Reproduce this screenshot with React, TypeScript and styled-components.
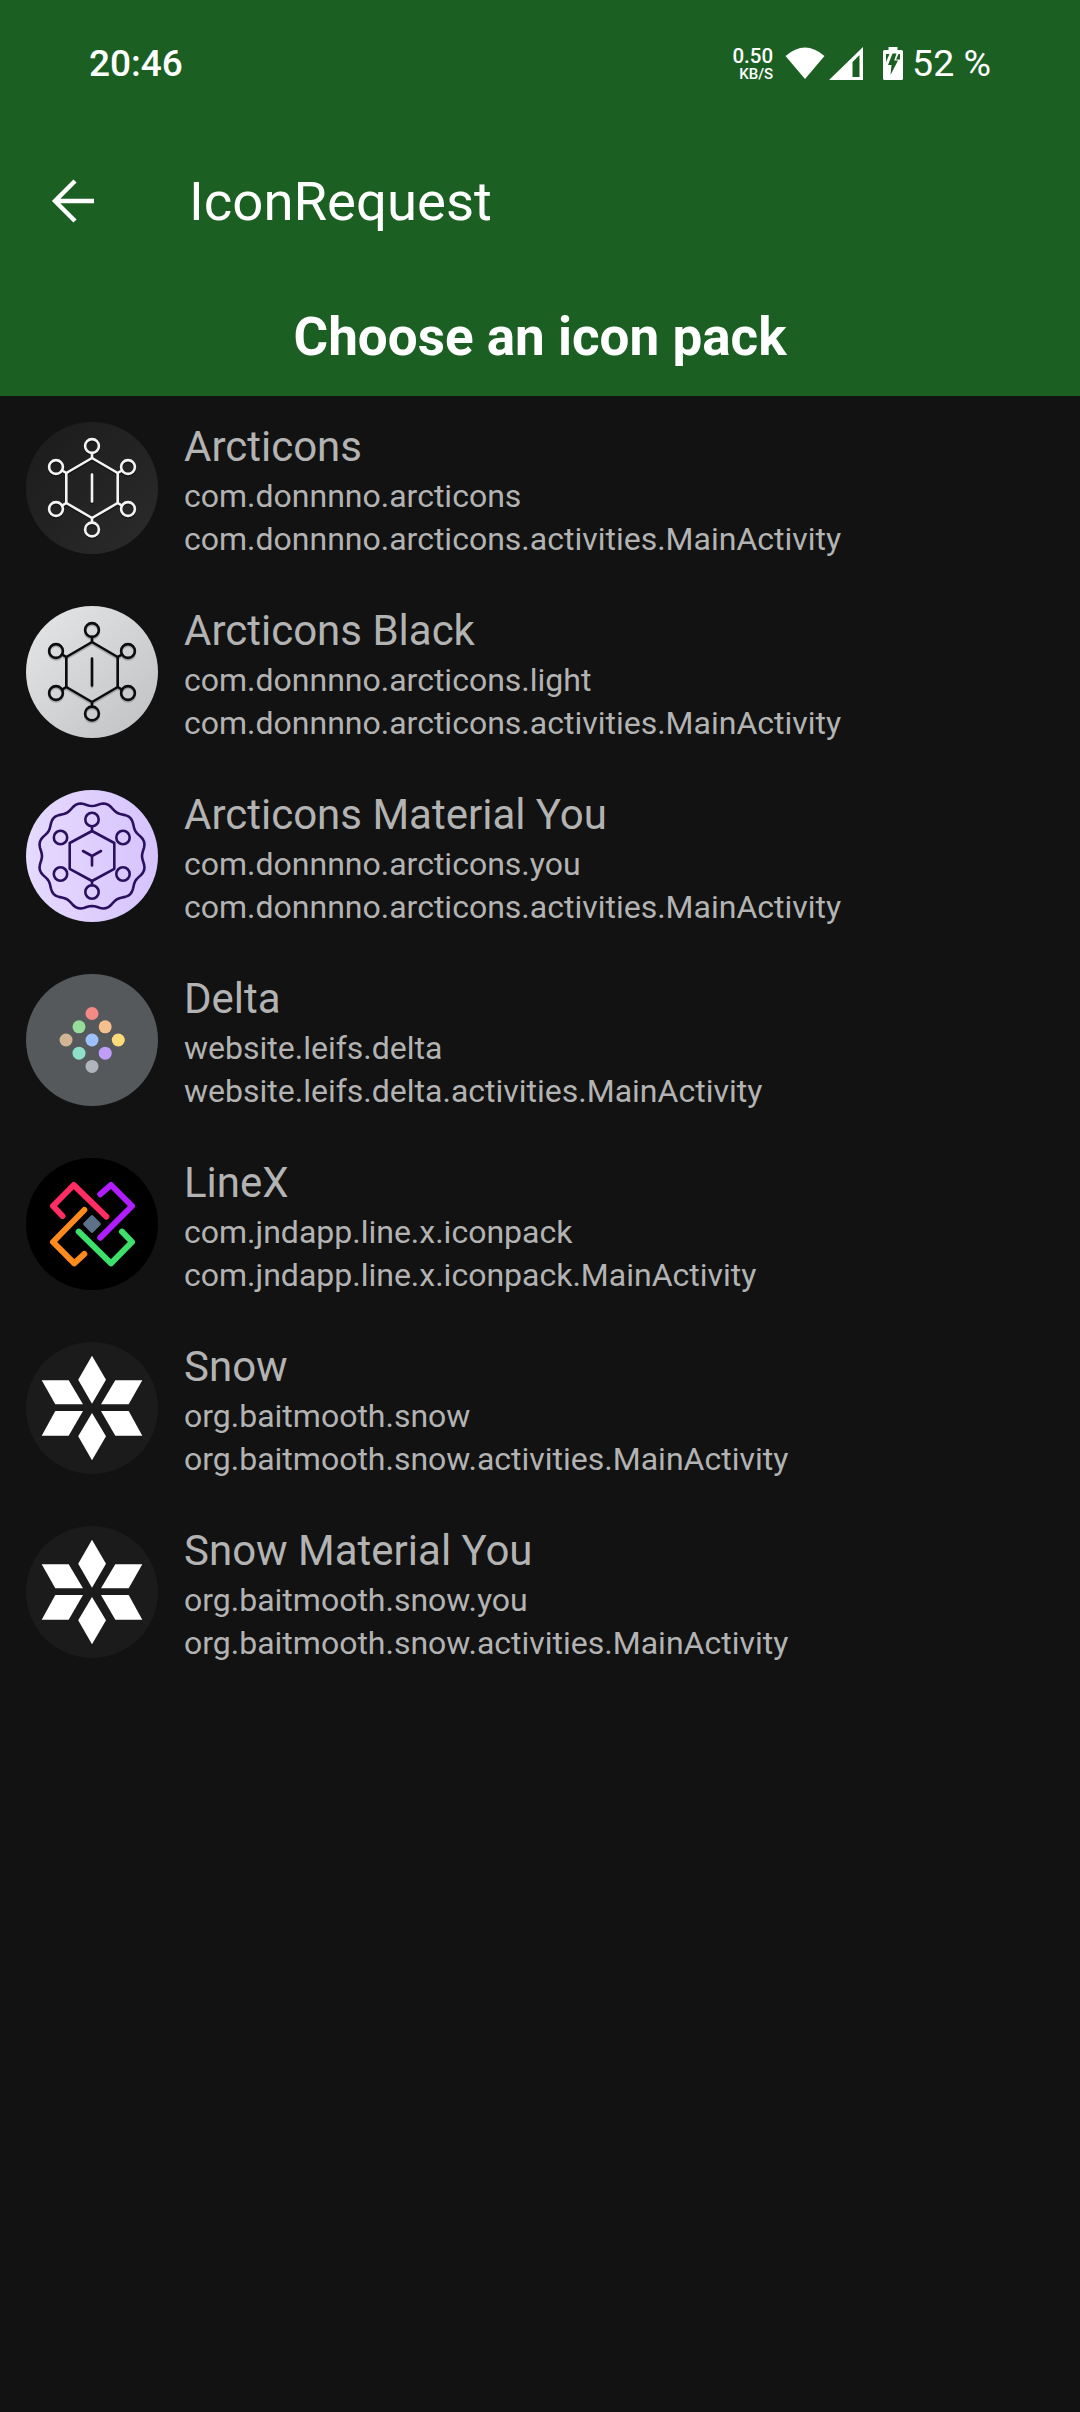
import React from 'react';
import styled, { createGlobalStyle } from 'styled-components';

const GlobalStyle = createGlobalStyle`
  html, body {
    margin: 0;
    padding: 0;
    background: #121212;
  }
`;

const Page = styled.div`
  width: 1080px;
  height: 2412px;
  background: #121212;
  font-family: Roboto, "Noto Sans", sans-serif;
  overflow: hidden;
`;

const Header = styled.header`
  height: 396px;
  background: #1c5f23;
  color: #fff;
  display: flex;
  flex-direction: column;
`;

const StatusBar = styled.div`
  height: 126px;
  padding: 0 89px 0 89px;
  display: flex;
  align-items: center;
  justify-content: space-between;
`;

const Time = styled.span`
  font-size: 37px;
  font-weight: 500;
`;

const StatusRight = styled.div`
  display: flex;
  align-items: center;
`;

const StatusGlyph = styled.svg<{ $gap?: number }>`
  margin-left: ${props => props.$gap || 0}px;
  flex-shrink: 0;
`;

const Speed = styled.div`
  display: flex;
  flex-direction: column;
  align-items: flex-end;
  font-weight: 500;
  margin-right: 12px;
`;

const SpeedValue = styled.span`
  font-size: 20.5px;
  line-height: 22px;
`;

const SpeedUnit = styled.span`
  font-size: 15px;
  line-height: 15px;
`;

const Battery = styled.span`
  font-size: 37.5px;
  margin-left: 9px;
`;

const Toolbar = styled.div`
  height: 150px;
  display: flex;
  align-items: center;
  padding-left: 50px;
`;

const BackButton = styled.svg`
  width: 48px;
  height: 48px;
  margin-right: 91px;
`;

const ToolbarTitle = styled.h1`
  margin: 0;
  font-size: 54.5px;
  font-weight: 400;
`;

const Subtitle = styled.h2`
  margin: 0;
  padding-top: 30px;
  text-align: center;
  font-size: 53px;
  line-height: 62px;
  font-weight: 700;
`;

const List = styled.div`
  display: flex;
  flex-direction: column;
  padding-top: 26px;
`;

const Row = styled.div`
  height: 184px;
  display: flex;
  align-items: flex-start;
  padding-left: 26px;
`;

const IconSvg = styled.svg`
  width: 132px;
  height: 132px;
  flex-shrink: 0;
  margin-right: 26px;
`;

const Info = styled.div`
  display: flex;
  flex-direction: column;
  margin-top: -4px;
`;

const Name = styled.div`
  font-size: 42px;
  line-height: 57px;
  color: #b3b3b3;
`;

const PackageLine = styled.div`
  font-size: 32px;
  line-height: 43px;
  color: #b3b3b3;
`;

const Circle = ({ fill, id }: { fill: [string, string]; id: string }) => (
  <>
    <defs>
      <linearGradient id={id} x1="0" y1="0" x2="1" y2="1">
        <stop offset="0" stopColor={fill[0]} />
        <stop offset="1" stopColor={fill[1]} />
      </linearGradient>
    </defs>
    <circle cx="66" cy="66" r="66" fill={`url(#${id})`} />
  </>
);

const HEX_R = [
  [0, -30],
  [25.7, -15],
  [25.7, 15],
  [0, 30],
  [-25.7, 15],
  [-25.7, -15],
];

const NODES = [
  [0, -42],
  [0, 41.5],
  [36, -21],
  [36, 21],
  [-36, -21],
  [-36, 21],
];

const ArcticonShape = ({ color, width }: { color: string; width: number }) => (
  <g fill="none" stroke={color} strokeWidth={width} strokeLinecap="round" strokeLinejoin="round">
    <polygon points={HEX_R.map(p => p.join(',')).join(' ')} />
    <path d="M0 -13.5V13.5" />
    {NODES.map(([x, y]) => (
      <circle key={`${x}${y}`} cx={x} cy={y} r="6.9" />
    ))}
    <path d="M0 -30V-35M0 30V34.6M25.7 -15L30 -17.6M25.7 15L30 17.6M-25.7 -15L-30 -17.6M-25.7 15L-30 17.6" />
  </g>
);

const Arcticon = ({ color, shadow }: { color: string; shadow: string }) => (
  <>
    <g transform="translate(66 67.6)" opacity="0.35">
      <ArcticonShape color={shadow} width={2.6} />
    </g>
    <g transform="translate(66 66)">
      <ArcticonShape color={color} width={2.6} />
    </g>
  </>
);

// wavy ring of the Material You icon
const wavyRing = () => {
  const pts: string[] = [];
  for (let a = 0; a < 360; a += 3) {
    const t = (a * Math.PI) / 180;
    const r = 52 - 2 * Math.cos(12 * t);
    pts.push(`${(r * Math.cos(t)).toFixed(2)},${(r * Math.sin(t)).toFixed(2)}`);
  }
  return pts.join(' ');
};

const ArcticonsIcon = () => (
  <IconSvg viewBox="0 0 132 132">
    <Circle id="arc-dark" fill={['#1b1b1b', '#2b2b2b']} />
    <Arcticon color="#f4f4f4" shadow="#000" />
  </IconSvg>
);

const ArcticonsBlackIcon = () => (
  <IconSvg viewBox="0 0 132 132">
    <Circle id="arc-light" fill={['#e6e7e9', '#bfc0c2']} />
    <Arcticon color="#0c0c0c" shadow="#555" />
  </IconSvg>
);

const ArcticonsYouIcon = () => (
  <IconSvg viewBox="0 0 132 132">
    <defs>
      <linearGradient id="arc-you" x1="0" y1="0" x2="1" y2="0">
        <stop offset="0" stopColor="#e6dafe" />
        <stop offset="1" stopColor="#d6c3fd" />
      </linearGradient>
    </defs>
    <circle cx="66" cy="66" r="66" fill="url(#arc-you)" />
    <g transform="translate(66 66)" fill="none" stroke="#2b1060" strokeWidth="2.6" strokeLinecap="round" strokeLinejoin="round">
      <polygon points={wavyRing()} />
      <polygon points="0,-25 22.3,-13 22.3,12.8 0,25 -22.3,12.8 -22.3,-13" />
      <circle cx="0" cy="-36.5" r="6.7" />
      <circle cx="0" cy="36" r="6.7" />
      <circle cx="31" cy="-18.5" r="6.7" />
      <circle cx="31" cy="18" r="6.7" />
      <circle cx="-31.5" cy="-18.5" r="6.7" />
      <circle cx="-31.5" cy="18" r="6.7" />
      <path d="M0 0L-9 -5M0 0L9 -5M0 0V9.5M0 -25V-29.8M0 25V29.3" />
    </g>
  </IconSvg>
);

const DELTA_DOTS: [number, number, string][] = [
  [0, -26.5, '#f48a86'],
  [-13, -13.2, '#96dc9a'],
  [13.2, -13.2, '#f6c08c'],
  [-26, 0, '#d3b596'],
  [0, 0, '#9dc1fb'],
  [26.3, 0, '#fbdb7a'],
  [-13, 13.2, '#8fe0cb'],
  [13.2, 13.2, '#c19dfb'],
  [0, 26.4, '#b0b4bd'],
];

const DeltaIcon = () => (
  <IconSvg viewBox="0 0 132 132">
    <circle cx="66" cy="66" r="66" fill="#55595c" />
    {DELTA_DOTS.map(([x, y, c]) => (
      <circle key={c} cx={66 + x} cy={66 + y} r="6.5" fill={c} />
    ))}
  </IconSvg>
);

const LineXIcon = () => (
  <IconSvg viewBox="0 0 132 132">
    <circle cx="66" cy="66" r="66" fill="#000" />
    <g transform="translate(66 66)" fill="none" strokeWidth="6" strokeLinecap="round" strokeLinejoin="round">
      <path d="M-29.5 -8L-39 -18L-18.3 -39L14.3 -7.3" stroke="#ff2d63" />
      <path d="M8.3 -29.7L19 -39L40 -18L8.3 13.7" stroke="#b01eff" />
      <path d="M-7.7 -14L-39 18L-17.7 39.3L-7.7 30" stroke="#ff8a1e" />
      <path d="M-13.3 7.7L19 39.3L40 18L30 7.7" stroke="#3ee06c" />
      <path d="M0 -7L7 0L0 7L-7 0Z" fill="#5d7288" stroke="#5d7288" strokeWidth="3.6" />
    </g>
  </IconSvg>
);

const SnowIcon = () => (
  <IconSvg viewBox="0 0 132 132">
    <circle cx="66" cy="66" r="66" fill="#1b1b1b" />
    <g transform="translate(66 66)" fill="#fff">
      <polygon points="0,-52.3 14,-28.3 0,-4.3 -13.8,-28.3" />
      <polygon points="0,52.3 14,28.3 0,5 -13.8,28.3" />
      <polygon points="23.3,-27.7 50.3,-27.7 36.7,-3.7 9,-3.7" />
      <polygon points="9,3 36.7,3 50.3,27.7 23.3,27.7" />
      <polygon points="-23.3,-27.7 -50.3,-27.7 -36.7,-3.7 -9,-3.7" />
      <polygon points="-9,3 -36.7,3 -50.3,27.7 -23.3,27.7" />
    </g>
  </IconSvg>
);

const packs = [
  { name: 'Arcticons', pkg: 'com.donnnno.arcticons', activity: 'com.donnnno.arcticons.activities.MainActivity', icon: <ArcticonsIcon /> },
  { name: 'Arcticons Black', pkg: 'com.donnnno.arcticons.light', activity: 'com.donnnno.arcticons.activities.MainActivity', icon: <ArcticonsBlackIcon /> },
  { name: 'Arcticons Material You', pkg: 'com.donnnno.arcticons.you', activity: 'com.donnnno.arcticons.activities.MainActivity', icon: <ArcticonsYouIcon /> },
  { name: 'Delta', pkg: 'website.leifs.delta', activity: 'website.leifs.delta.activities.MainActivity', icon: <DeltaIcon /> },
  { name: 'LineX', pkg: 'com.jndapp.line.x.iconpack', activity: 'com.jndapp.line.x.iconpack.MainActivity', icon: <LineXIcon /> },
  { name: 'Snow', pkg: 'org.baitmooth.snow', activity: 'org.baitmooth.snow.activities.MainActivity', icon: <SnowIcon /> },
  { name: 'Snow Material You', pkg: 'org.baitmooth.snow.you', activity: 'org.baitmooth.snow.activities.MainActivity', icon: <SnowIcon /> },
];

const App: React.FC = () => (
  <Page>
    <GlobalStyle />
    <Header>
      <StatusBar>
        <Time>20:46</Time>
        <StatusRight>
          <Speed>
            <SpeedValue>0.50</SpeedValue>
            <SpeedUnit>KB/S</SpeedUnit>
          </Speed>
          <StatusGlyph width="40" height="34" viewBox="0 0 40 34">
            <path d="M0.5 10Q20 -7 39.5 10L20 33Z" fill="#fff" />
          </StatusGlyph>
          <StatusGlyph $gap={3} width="36" height="34" viewBox="0 0 36 34">
            <path fillRule="evenodd" d="M1 34L35 1V34ZM24.5 16V31H31.5V9L24.5 16Z" fill="#fff" />
          </StatusGlyph>
          <StatusGlyph $gap={19} width="20" height="33" viewBox="0 0 20 33">
            <path d="M5.5 0H14.5V3H18.5Q20 3 20 4.5V31.5Q20 33 18.5 33H1.5Q0 33 0 31.5V4.5Q0 3 1.5 3H5.5Z" fill="#fff" />
            <path d="M9.5 6.5L5 18H8.5L7.5 28L15 13.5H11.2L13.5 6.5ZM3 7V15L6.5 7ZM17 7H15.5L13 12.5H17Z" fill="#1c5f23" />
          </StatusGlyph>
          <Battery>52 %</Battery>
        </StatusRight>
      </StatusBar>
      <Toolbar>
        <BackButton viewBox="0 0 48 48">
          <path d="M44 24H6M25 4L5 24L25 44" fill="none" stroke="#fff" strokeWidth="4.4" />
        </BackButton>
        <ToolbarTitle>IconRequest</ToolbarTitle>
      </Toolbar>
      <Subtitle>Choose an icon pack</Subtitle>
    </Header>
    <List>
      {packs.map(p => (
        <Row key={p.name}>
          {p.icon}
          <Info>
            <Name>{p.name}</Name>
            <PackageLine>{p.pkg}</PackageLine>
            <PackageLine>{p.activity}</PackageLine>
          </Info>
        </Row>
      ))}
    </List>
  </Page>
);

export default App;
